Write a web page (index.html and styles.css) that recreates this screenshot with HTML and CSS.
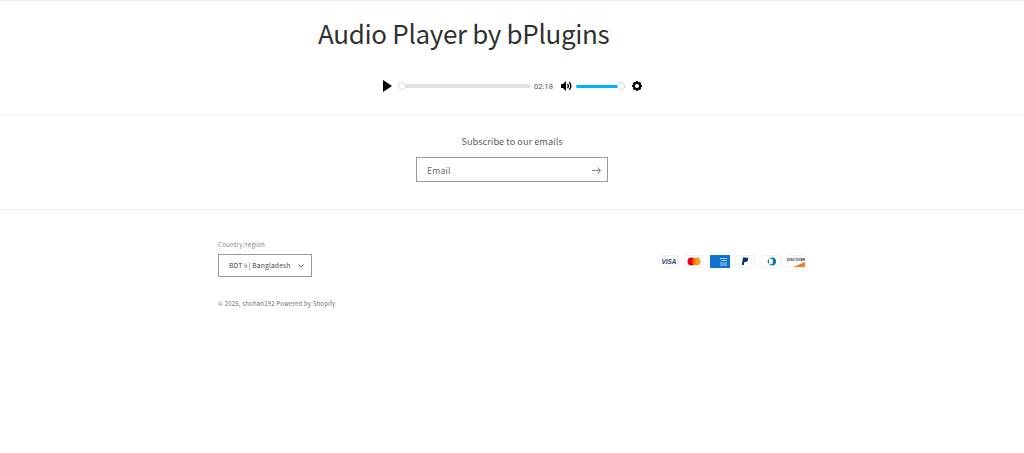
FILE: index.html
```html
<!DOCTYPE html>
<html lang="en">
<head>
<meta charset="utf-8">
<title>Audio Player by bPlugins</title>
<link rel="stylesheet" href="styles.css">
</head>
<body>
<main class="main">
  <h1 class="title">Audio Player by bPlugins</h1>
  <div class="player">
    <svg class="ic-play" width="9" height="12" viewBox="0 0 9 12"><path d="M0 0L9 6L0 12Z"/></svg>
    <div class="seek"><span class="thumb"></span></div>
    <span class="time">02:18</span>
    <svg class="ic-vol" width="11" height="10" viewBox="0 0 11 10"><path d="M0 3H2L5 0V10L2 7H0Z"/><path d="M6.5 3a2.8 2.8 0 0 1 0 4M8.3 1.3a5.2 5.2 0 0 1 0 7.4" fill="none" stroke="#000" stroke-width="1.4"/></svg>
    <div class="vol"><span class="vol-fill"></span><span class="thumb thumb-end"></span></div>
    <svg class="ic-gear" width="10" height="10" viewBox="0 0 10 10"><circle cx="5" cy="5" r="3.1" fill="none" stroke="#000" stroke-width="2"/><path d="M5 0V2M5 8V10M0 5H2M8 5H10M1.5 1.5L3 3M7 7L8.5 8.5M8.5 1.5L7 3M3 7L1.5 8.5" stroke="#000" stroke-width="1.8"/></svg>
  </div>
</main>
<footer>
  <section class="subscribe">
    <h2 class="sub-title">Subscribe to our emails</h2>
    <div class="email">
      <span>Email</span>
      <svg width="9" height="7" viewBox="0 0 9 7" fill="none" stroke="#666" stroke-width=".8"><path d="M0 3.5H8.4M5.5 .5L8.5 3.5L5.5 6.5"/></svg>
    </div>
  </section>
  <section class="bottom">
    <div class="bottom-row">
      <div class="country">
        <div class="label">Country/region</div>
        <div class="select"><span>BDT ৳ | Bangladesh</span>
          <svg width="6" height="4" viewBox="0 0 6 4" fill="none" stroke="#444" stroke-width=".9"><path d="M.3 .5L3 3.2L5.7 .5"/></svg>
        </div>
      </div>
      <ul class="pay">
        <li class="card"><svg viewBox="0 0 20 12" width="20" height="13"><text x="10" y="8.6" text-anchor="middle" class="visa">VISA</text></svg></li>
        <li class="card"><svg viewBox="0 0 20 12" width="20" height="13"><circle cx="7.5" cy="6" r="4" fill="#eb001b"/><circle cx="12.5" cy="6" r="4" fill="#f79e1b"/><path d="M10 2.9a4 4 0 0 1 0 6.2a4 4 0 0 1 0-6.2Z" fill="#ff5f00"/></svg></li>
        <li class="card card-amex"><svg viewBox="0 0 20 12" width="20" height="13"><path d="M10 3H17M11 5H17M10 7.5H17M10 9.5H17" stroke="#a9cdf0" stroke-width="1.1"/></svg></li>
        <li class="card"><svg viewBox="0 0 20 12" width="20" height="13"><path d="M8 2H11.5C13 2 13.5 3 13 4.5C12.5 6 11.5 6.5 10 6.5H9.3L8.8 9.5H6.8Z" fill="#003087"/></svg></li>
        <li class="card"><svg viewBox="0 0 20 12" width="20" height="13"><circle cx="11" cy="6" r="4" fill="#0079be"/><circle cx="9" cy="6" r="3" fill="#fff"/><path d="M8 3.8V8.2A2.4 2.4 0 0 1 8 3.8Z" fill="#0079be"/></svg></li>
        <li class="card card-disc"><svg viewBox="0 0 20 12" width="20" height="13"><text x="10" y="5.4" text-anchor="middle" class="disc">DISCOVER</text><path d="M6 12L20 6V11A1 1 0 0 1 19 12Z" fill="#f48120"/></svg></li>
      </ul>
    </div>
    <p class="copy">© 2025, shohan192 Powered by Shopify</p>
  </section>
</footer>
</body>
</html>
```
FILE: styles.css
```css
* { box-sizing: border-box; }
html, body { margin: 0; padding: 0; }
body {
  background: #fff;
  color: #121212;
  font-family: "Noto Sans CJK SC", "Noto Sans", sans-serif;
  border-top: 1px solid #fbe9ee;
}
.main { height: 114px; overflow: hidden; }
.title {
  margin: 0;
  padding: 11px 0 0 318px;
  font-size: 26px;
  line-height: 42px;
  font-weight: 400;
  letter-spacing: -.33px;
  color: rgba(18,18,18,.9);
}
.player {
  margin: 25px 0 0 383px;
  display: flex;
  align-items: center;
  height: 14px;
  width: 260px;
}
.ic-play { margin-right: 6px; flex: none; }
.seek { position: relative; width: 133px; height: 4px; background: #dfe3e8; border-radius: 2px; flex: none; }
.thumb { position: absolute; left: 0; top: -2px; width: 8px; height: 8px; border-radius: 50%; background: #fff; border: 1px solid #d5d9de; }
.time { font: 7.6px/12px Roboto, sans-serif; color: #4a5464; margin: 1px 8px 0 3px; white-space: nowrap; }
.ic-vol { flex: none; margin-right: 4px; }
.vol { position: relative; width: 49px; height: 3px; background: #00b2ff; border-radius: 2px; flex: none; margin-right: 7px; }
.vol-fill { display: block; height: 100%; }
.thumb-end { left: auto; right: 0; top: -2.5px; }
.ic-gear { flex: none; }
.subscribe {
  border-top: 1px solid #f0f0f0;
  border-bottom: 1px solid #f0f0f0;
  height: 95px;
  display: flex;
  flex-direction: column;
  align-items: center;
}
.sub-title {
  margin: 17px 0 0;
  font-size: 9.2px;
  line-height: 16px;
  font-weight: 400;
  letter-spacing: .03px;
  color: rgba(18,18,18,.75);
}
.email {
  margin-top: 8px;
  width: 192px;
  height: 25px;
  border: 1px solid #999;
  display: flex;
  align-items: center;
  justify-content: space-between;
  padding: 1px 6px 0 10px;
  font-size: 8.6px;
  letter-spacing: .2px;
  color: rgba(18,18,18,.7);
}
.bottom { padding: 28px 218px 0 218px; }
.bottom-row { display: flex; justify-content: space-between; align-items: flex-start; }
.label { font-size: 6.2px; line-height: 13px; letter-spacing: .2px; color: rgba(18,18,18,.6); }
.select {
  margin-top: 3px;
  width: 94px;
  height: 23px;
  border: 1px solid #999;
  display: flex;
  align-items: center;
  justify-content: space-between;
  padding: 0 7px 0 10px;
  font-size: 6.8px;
  letter-spacing: .1px;
  white-space: nowrap;
  color: rgba(18,18,18,.85);
}
.pay { list-style: none; margin: 17px 0 0; padding: 0; display: flex; gap: 5.5px; }
.card { width: 20px; height: 13px; background: #fff; border: 1px solid #f3f3f3; border-radius: 2px; display: flex; overflow: hidden; }
.card svg { flex: none; margin: -1px 0 0 -1px; }
.card-amex { background: #0f72cf; border-color: #0f72cf; border-radius: 0; }
.visa { font: italic 700 6.4px "Liberation Sans", sans-serif; fill: #2a3a78; }
.disc { font: 700 3.6px "Liberation Sans", sans-serif; fill: #333; }
.copy { margin: 22px 0 0; font-size: 6px; line-height: 10px; letter-spacing: .2px; color: rgba(18,18,18,.7); }
```
